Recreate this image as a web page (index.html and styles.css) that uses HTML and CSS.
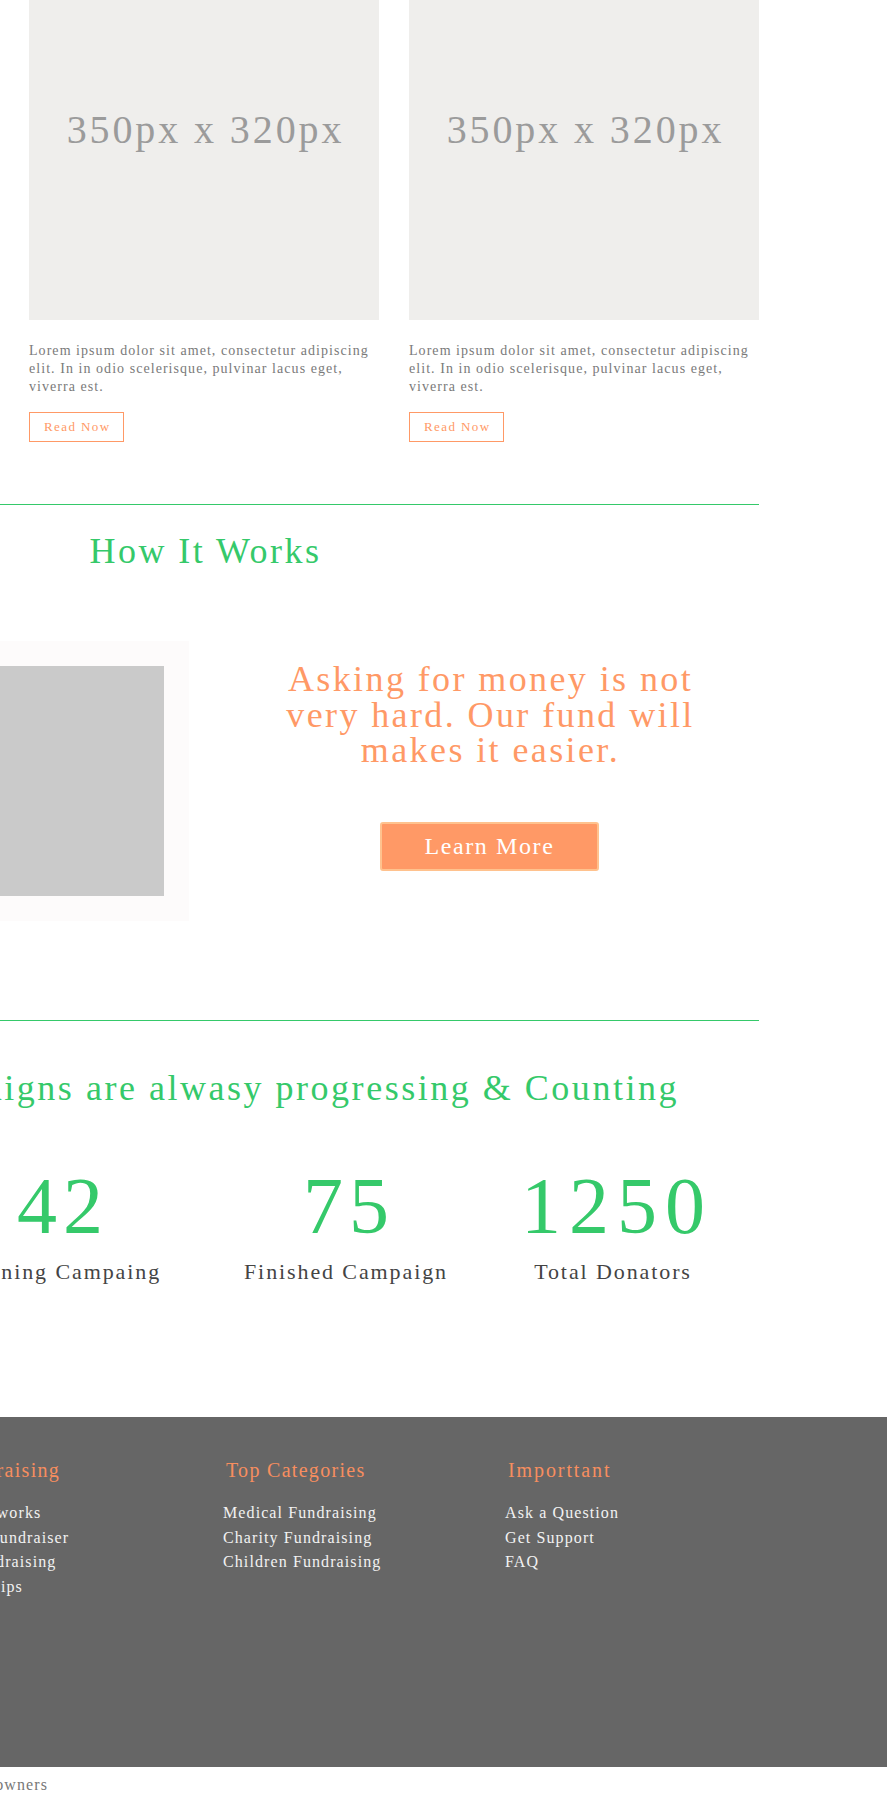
FILE: index.html
```html
<!DOCTYPE html>
<html lang="en">
<head>
<meta charset="utf-8">
<title>Fund</title>
<link rel="stylesheet" href="styles.css">
</head>
<body>
<div class="page">
  <section class="posts wrap">
    <article class="post">
      <div class="thumb"><span>350px x 320px</span></div>
      <p>Lorem ipsum dolor sit amet, consectetur adipiscing elit. In in odio scelerisque, pulvinar lacus eget, viverra est.</p>
      <a class="btn-outline" href="#">Read Now</a>
    </article>
    <article class="post">
      <div class="thumb"><span>350px x 320px</span></div>
      <p>Lorem ipsum dolor sit amet, consectetur adipiscing elit. In in odio scelerisque, pulvinar lacus eget, viverra est.</p>
      <a class="btn-outline" href="#">Read Now</a>
    </article>
    <article class="post">
      <div class="thumb"><span>350px x 320px</span></div>
      <p>Lorem ipsum dolor sit amet, consectetur adipiscing elit. In in odio scelerisque, pulvinar lacus eget, viverra est.</p>
      <a class="btn-outline" href="#">Read Now</a>
    </article>
  </section>

  <hr class="rule rule-first">

  <section class="how wrap">
    <h2 class="section-title">How It Works</h2>
    <div class="how-row">
      <div class="media-frame"><div class="media"></div></div>
      <div class="how-copy">
        <h3>Asking for money is not very hard. Our fund will makes it easier.</h3>
        <a class="btn-solid" href="#">Learn More</a>
      </div>
    </div>
  </section>

  <hr class="rule rule-second">

  <section class="stats wrap">
    <h2 class="section-title stats-title">Our Campaigns are alwasy progressing &amp; Counting</h2>
    <div class="stat-grid">
      <div class="stat"><div class="stat-num">42</div><div class="stat-label">Running Campaing</div></div>
      <div class="stat"><div class="stat-num">75</div><div class="stat-label">Finished Campaign</div></div>
      <div class="stat"><div class="stat-num stat-num-wide">1250</div><div class="stat-label">Total Donators</div></div>
    </div>
  </section>

  <footer class="site-footer">
    <div class="footer-cols">
      <div class="fcol">
        <h4>Fund raising</h4>
        <ul>
          <li>How it works</li>
          <li>Begin Fundraiser</li>
          <li>Go Fundraising</li>
          <li>Useful tips</li>
        </ul>
      </div>
      <div class="fcol">
        <h4>Top Categories</h4>
        <ul>
          <li>Medical Fundraising</li>
          <li>Charity Fundraising</li>
          <li>Children Fundraising</li>
        </ul>
      </div>
      <div class="fcol">
        <h4 class="wide">Importtant</h4>
        <ul>
          <li>Ask a Question</li>
          <li>Get Support</li>
          <li>FAQ</li>
        </ul>
      </div>
    </div>
  </footer>

  <p class="copyright">&copy; 2016 Fund. All trademarks belong to their owners</p>
</div>
</body>
</html>
```

FILE: styles.css
```css
html, body {
  margin: 0;
  padding: 0;
  background: #ffffff;
}

body {
  font-family: "Liberation Serif", "Times New Roman", serif;
  color: #777777;
  overflow: hidden;
}

.page {
  width: 887px;
  min-height: 1815px;
}

.wrap {
  width: 1110px;
  margin-left: -351px;
}

/* ---------- posts ---------- */
.posts {
  display: grid;
  grid-template-columns: repeat(3, 350px);
  column-gap: 30px;
}

.post {
  display: flex;
  flex-direction: column;
  align-items: flex-start;
}

.thumb {
  width: 350px;
  height: 320px;
  box-sizing: border-box;
  padding-top: 106px;
  background: #efeeec;
  text-align: center;
}

.thumb span {
  display: block;
  font-size: 40px;
  line-height: 48px;
  letter-spacing: 2.9px;
  padding-left: 3px;
  color: #9b9b9b;
}

.post p {
  margin: 22px 0 0;
  font-size: 14px;
  line-height: 18px;
  letter-spacing: 1.05px;
  color: #7a7a7a;
}

.btn-outline {
  margin-top: 16px;
  display: inline-block;
  box-sizing: border-box;
  height: 30px;
  padding: 0 13px 0 14px;
  border: 1px solid #ff9966;
  font-size: 13px;
  line-height: 28px;
  letter-spacing: 1.4px;
  color: #ff9966;
  text-decoration: none;
}

/* ---------- rules ---------- */
.rule {
  border: 0;
  height: 1px;
  background: #35c96a;
  width: 1110px;
  margin: 0 0 0 -351px;
}

.rule-first { margin-top: 62px; }
.rule-second { margin-top: 99px; }

/* ---------- how it works ---------- */
.section-title {
  margin: 0;
  font-weight: normal;
  font-size: 36px;
  line-height: 40px;
  letter-spacing: 2.45px;
  color: #35c96a;
  text-align: center;
}

.how .section-title { margin-top: 26px; padding-left: 3px; }

.how-row {
  display: flex;
  margin-top: 70px;
}

.media-frame {
  flex: 0 0 540px;
  box-sizing: border-box;
  padding: 25px;
  background: #fdfbfb;
}

.media {
  height: 230px;
  background: #cacaca;
}

.how-copy {
  flex: 1;
  padding-left: 33px;
  text-align: center;
}

.how-copy h3 {
  max-width: 450px;
  margin: 21px auto 0;
  font-weight: normal;
  font-size: 36px;
  line-height: 35.5px;
  letter-spacing: 2.4px;
  color: #ff9966;
}

.btn-solid {
  display: inline-block;
  box-sizing: border-box;
  width: 219px;
  height: 49px;
  margin-top: 53px;
  margin-left: -2px;
  border: 2px solid #ffc28e;
  border-radius: 3px;
  background: #ff9966;
  color: #ffffff;
  font-size: 24px;
  line-height: 45px;
  letter-spacing: 1.6px;
  text-decoration: none;
}

/* ---------- stats ---------- */
.stats-title {
  margin-top: 47px;
  text-align: right;
  padding-right: 80px;
  letter-spacing: 2.52px;
}

.stat-grid {
  display: grid;
  grid-template-columns: 286px 286px 248px;
  margin-top: 53px;
  margin-left: 268px;
  text-align: center;
}

.stat-num {
  font-size: 80px;
  line-height: 90px;
  letter-spacing: 6px;
  padding-left: 6px;
  color: #35c96a;
}

.stat-num-wide {
  letter-spacing: 8px;
  padding-left: 8px;
}

.stat-label {
  margin-top: 7px;
  font-size: 22px;
  line-height: 28px;
  letter-spacing: 1.9px;
  color: #444444;
}

/* ---------- footer ---------- */
.site-footer {
  margin-top: 131px;
  height: 350px;
  box-sizing: border-box;
  padding-top: 41px;
  background: #666666;
}

.footer-cols {
  display: grid;
  grid-template-columns: repeat(3, 282px);
  margin-left: -59px;
}

.fcol h4 {
  margin: 0;
  padding-left: 3px;
  font-weight: normal;
  font-size: 20px;
  line-height: 24px;
  letter-spacing: 1.3px;
  color: #f78e5f;
}

.fcol h4.wide {
  letter-spacing: 1.9px;
}

.fcol ul {
  list-style: none;
  margin: 19px 0 0;
  padding: 0;
}

.fcol li {
  font-size: 16px;
  line-height: 24.5px;
  letter-spacing: 1.1px;
  color: #f2f2f2;
}

.copyright {
  width: 399px;
  margin: 6px 0 0 -351px;
  text-align: right;
  font-size: 16px;
  line-height: 24px;
  letter-spacing: 1.1px;
  color: #777777;
  white-space: nowrap;
}
```
